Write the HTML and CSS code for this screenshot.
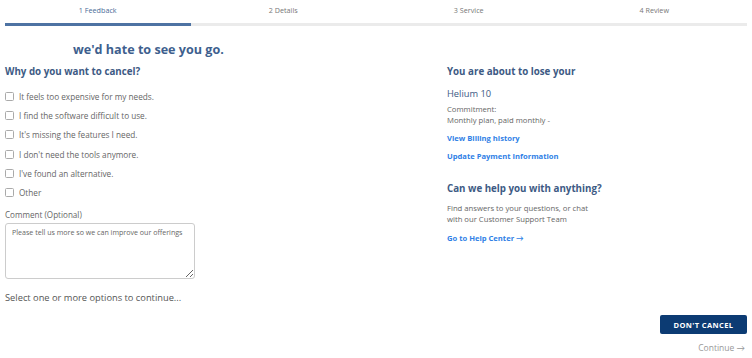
FILE: index.html
```html
<!DOCTYPE html>
<html lang="en">
<head>
    <meta charset="UTF-8">
    <meta name="viewport" content="width=device-width, initial-scale=1.0">
    <title>Cancel Subscription</title>
    <link rel="stylesheet" href="styles.css">
</head>
<body>
    <div class="page">
        <div class="steps">
            <div class="step active">1 Feedback</div>
            <div class="step">2 Details</div>
            <div class="step">3 Service</div>
            <div class="step">4 Review</div>
        </div>

        <h1 class="headline">we'd hate to see you go.</h1>

        <div class="columns">
            <div class="left">
                <h2 class="title">Why do you want to cancel?</h2>
                <ul class="reasons">
                    <li><span class="box"></span>It feels too expensive for my needs.</li>
                    <li><span class="box"></span>I find the software difficult to use.</li>
                    <li><span class="box"></span>It's missing the features I need.</li>
                    <li><span class="box"></span>I don't need the tools anymore.</li>
                    <li><span class="box"></span>I've found an alternative.</li>
                    <li><span class="box"></span>Other</li>
                </ul>
                <label class="comment-label">Comment (Optional)</label>
                <textarea class="comment" placeholder="Please tell us more so we can improve our offerings"></textarea>
                <p class="hint">Select one or more options to continue...</p>
            </div>

            <div class="right">
                <h2 class="title">You are about to lose your</h2>
                <div class="plan">Helium 10</div>
                <p class="small">Commitment:<br>Monthly plan, paid monthly -</p>
                <a class="link" href="#">View Billing history</a>
                <a class="link" href="#">Update Payment Information</a>

                <h2 class="title help">Can we help you with anything?</h2>
                <p class="small">Find answers to your questions, or chat<br>with our Customer Support Team</p>
                <a class="link help-link" href="#">Go to Help Center &rarr;</a>
            </div>
        </div>

        <div class="footer">
            <button class="stay">DON'T CANCEL</button>
            <a class="continue" href="#">Continue &rarr;</a>
        </div>
    </div>
</body>
</html>
```

FILE: styles.css
```css
body {
    margin: 0;
    font-family: "Open Sans", Lato, sans-serif;
    background-color: #fff;
    color: #666;
}

.page {
    padding: 0 5px;
}

.steps {
    display: flex;
}

.step {
    flex: 1;
    text-align: center;
    font-size: 7.2px;
    line-height: 10px;
    padding: 5px 0 8px;
    color: #777;
    border-bottom: 3px solid #ebebeb;
}

.step.active {
    color: #4a6a98;
    border-bottom-color: #4e73a3;
}

.headline {
    margin: 15px 0 0;
    padding-left: 68px;
    font-size: 12.6px;
    line-height: 18px;
    font-weight: 700;
    color: #3e5f8e;
}

.columns {
    display: flex;
    margin-top: 6px;
}

.left {
    width: 442px;
}

.right {
    flex: 1;
    display: flex;
    flex-direction: column;
    align-items: flex-start;
}

.title {
    margin: 0;
    font-size: 9.75px;
    line-height: 14px;
    font-weight: 700;
    color: #3d5a84;
}

.reasons {
    list-style: none;
    margin: 8px 0 0;
    padding: 0;
}

.reasons li {
    display: flex;
    align-items: center;
    height: 19.2px;
    font-size: 8.2px;
    color: #666;
}

.box {
    width: 7px;
    height: 7px;
    border: 1px solid #aaa;
    border-radius: 1.5px;
    margin-right: 5px;
}

.comment-label {
    display: block;
    margin-top: 8px;
    font-size: 8.1px;
    line-height: 10px;
    color: #666;
}

.comment {
    display: block;
    box-sizing: border-box;
    width: 190px;
    height: 56px;
    margin-top: 3px;
    padding: 3px 6px;
    border: 1px solid #ccc;
    border-radius: 3px;
    font-family: inherit;
    font-size: 7.1px;
    resize: vertical;
}

.comment::placeholder {
    color: #666;
}

.hint {
    margin: 13px 0 0;
    font-size: 9.3px;
    line-height: 12px;
    color: #555;
}

.plan {
    margin-top: 9px;
    font-size: 9.3px;
    line-height: 12px;
    color: #3d5a84;
}

.small {
    margin: 4px 0 0;
    font-size: 7.7px;
    line-height: 11px;
    color: #666;
}

.link {
    margin-top: 7px;
    font-size: 7.6px;
    line-height: 11px;
    font-weight: 700;
    color: #2f7fe6;
    text-decoration: none;
}

.title.help {
    margin-top: 20px;
}

.help + .small {
    margin-top: 7px;
}

.help-link {
    margin-top: 8px;
}

.footer {
    display: flex;
    flex-direction: column;
    align-items: flex-end;
    margin-top: 11px;
}

.stay {
    width: 87px;
    height: 19px;
    padding: 0;
    border: none;
    border-radius: 2px;
    background-color: #0c3b73;
    color: #fff;
    font-family: inherit;
    font-size: 7.5px;
    font-weight: 700;
    letter-spacing: 0.4px;
}

.continue {
    margin: 8px 2px 0 0;
    font-size: 8.5px;
    line-height: 12px;
    color: #999;
    text-decoration: none;
}
```
